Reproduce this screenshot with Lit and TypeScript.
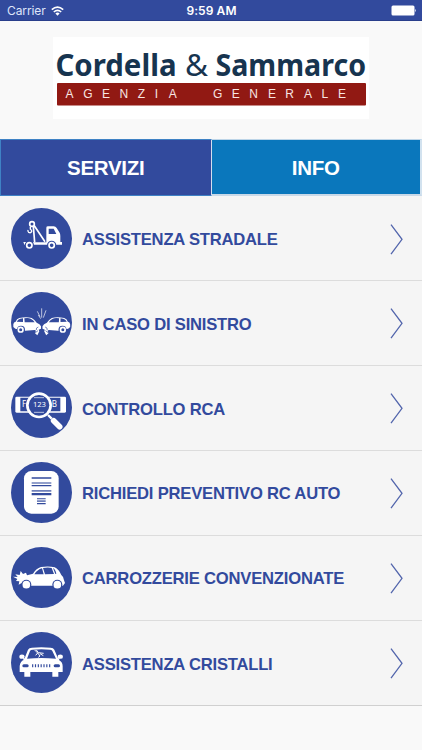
import { LitElement, html, svg, css } from "lit";
import { customElement } from "lit/decorators.js";

const crashCar = svg`
  <path fill="#fff" d="M39 126 Q40 119 46 118 Q49 109 57 107 Q78 102 94 107 Q104 113 109 121 Q119 124 122 132 L122 139 L115 142 L117 147 L111 159 L104 153 L107 145 L103 143 L75 145 L45 139 L39 134 Z"/>
  <path fill="#324a9d" d="M49 118 Q53 110 60 109 L68 108 L68 119 Z M72 108 Q84 106 91 109 Q99 113 103 120 L73 120 Z"/>
  <circle cx="62" cy="142" r="12" fill="#324a9d"/>
  <circle cx="61" cy="142" r="7" fill="#324a9d" stroke="#fff" stroke-width="5"/>
  <path fill="none" stroke="#324a9d" stroke-width="2" d="M108 143 Q106 136 114 134 M105 151 L113 145"/>`;

const icons = {
  tow: svg`<svg class="icon" viewBox="32 21 183 183">
    <circle class="disc" cx="123.500" cy="112.500" r="91.500"/>
    <g fill="none" stroke="#fff">
      <circle cx="95" cy="69" r="7" stroke-width="5"/>
      <path stroke-width="4" d="M90 77 L90 84 Q95 88 94 92 Q91 97 85 94 Q82 91 83 87"/>
      <path stroke-width="5" d="M99 76 L103 124 M101 73 L134 122"/>
    </g>
    <path fill="#fff" d="M69 123 H77 V131 H72 Z M98 124 H138 V80 Q138 76 143 76 H160 Q166 76 169 81 L177 94 Q180 98 180 105 V123 H185 V131 H98 Z"/>
    <path fill="#324a9d" d="M145 83 H160 L168 99 H145 Z"/>
    <circle cx="87" cy="133" r="14" fill="#324a9d"/><circle cx="87" cy="133" r="8" fill="none" stroke="#fff" stroke-width="5"/>
    <circle cx="154" cy="133" r="14" fill="#324a9d"/><circle cx="154" cy="133" r="8" fill="none" stroke="#fff" stroke-width="5"/>
  </svg>`,
  crash: svg`<svg class="icon" viewBox="32 29 183 183">
    <circle class="disc" cx="123.500" cy="120.500" r="91.500"/>
    ${crashCar}<g transform="translate(248.500 0) scale(-1 1)">${crashCar}</g>
    <path fill="none" stroke="#fff" stroke-width="2" d="M111 87 L119 103 M124 78 V106 M137 84 L129 106 M114 98 L121 109"/>
  </svg>`,
  plate: svg`<svg class="icon" viewBox="32 29 183 183">
    <circle class="disc" cx="123.500" cy="120.500" r="91.500"/>
    <rect x="45" y="88" width="152" height="48" rx="4" fill="#fff"/>
    <path fill="#324a9d" d="M60 91 H180 V132 H60 Z"/>
    <text class="plate" x="65" y="120" font-size="24">F</text>
    <text class="plate" x="154" y="120" font-size="24">B</text>
    <circle cx="116" cy="114" r="35" fill="#324a9d" stroke="#fff" stroke-width="8"/>
    <path stroke="#fff" stroke-width="2" d="M101 91 H131 M101 135 H131"/>
    <text class="plate" x="98" y="120" font-size="23" textLength="39">123</text>
    <path stroke="#fff" stroke-width="7" d="M143 143 L154 154"/>
    <path stroke="#fff" stroke-width="17" stroke-linecap="round" d="M160 160 L178 178"/>
  </svg>`,
  quote: svg`<svg class="icon" viewBox="32 29 183 183">
    <circle class="disc" cx="123.500" cy="120.500" r="91.500"/>
    <rect x="71" y="56" width="104" height="128" rx="22" fill="#fff"/>
    <g fill="#324a9d"><path d="M94 75h59v4H94z M94 98h59v4H94z M94 122h59v7H94z M110 138h26v3H110z M110 152h26v4H110z"/>
    <path opacity=".7" d="M94 90h59v4H94z M94 113h59v5H94z M110 144h26v5H110z"/></g>
  </svg>`,
  body: svg`<svg class="icon" viewBox="32 29 183 183">
    <circle class="disc" cx="123.500" cy="120.500" r="91.500"/>
    <path fill="#fff" d="M38 118 L52 119 L45 111 L58 113 L61 101 L68 110 L77 106 L80 114 L98 109 Q108 93 122 89 Q145 85 163 90 Q176 97 183 113 Q191 119 191 129 L194 137 L188 145 H67 L64 137 L55 142 L57 132 L47 131 L51 125 Z"/>
    <path fill="#324a9d" d="M102 111 Q111 97 125 93 L130 111 Z M128 92 Q144 89 154 92 L161 110 L134 111 Z M158 92 Q165 95 168 109 L165 110 Z"/>
    <circle cx="78" cy="142" r="15" fill="#324a9d"/><circle cx="78" cy="142" r="11.500" fill="#fff"/>
    <circle cx="171" cy="142" r="15" fill="#324a9d"/><circle cx="171" cy="142" r="11.500" fill="#fff"/>
  </svg>`,
  glass: svg`<svg class="icon" viewBox="32 29 183 183">
    <circle class="disc" cx="123.500" cy="120.500" r="91.500"/>
    <ellipse cx="65" cy="103" rx="8" ry="6.500" fill="#fff"/><ellipse cx="180" cy="103" rx="8" ry="6.500" fill="#fff"/>
    <path fill="#fff" d="M67 108 H73 L83 82 Q86 76 95 76 Q123 73 151 76 Q159 76 162 82 L173 108 H178 L176 113 Q187 119 187 132 V149 H174 V163 H156 V149 H90 V163 H72 V149 H58 V131 Q60 117 70 113 Z"/>
    <path fill="#324a9d" d="M80 109 L89 86 Q91 82 97 82 Q123 79 149 82 Q154 82 156 86 L167 109 Q123 105 80 109 Z"/>
    <path fill="none" stroke="#fff" stroke-width="3" d="M103 83 L112 92 L106 99 M108 83 L114 91 L130 93 M112 92 L119 101 L114 105 M119 94 L129 100"/>
    <rect x="66" y="126" width="19" height="9" rx="4.500" fill="#324a9d"/><rect x="160" y="126" width="19" height="9" rx="4.500" fill="#324a9d"/>
    <path stroke="#324a9d" stroke-width="3.500" d="M97 126v9 M105.500 126v9 M114 126v9 M122.500 126v9 M131 126v9 M139.500 126v9 M148 126v9"/>
  </svg>`,
};

const services = [
  { icon: icons.tow, label: "ASSISTENZA STRADALE" },
  { icon: icons.crash, label: "IN CASO DI SINISTRO" },
  { icon: icons.plate, label: "CONTROLLO RCA" },
  { icon: icons.quote, label: "RICHIEDI PREVENTIVO RC AUTO" },
  { icon: icons.body, label: "CARROZZERIE CONVENZIONATE" },
  { icon: icons.glass, label: "ASSISTENZA CRISTALLI" },
];

@customElement("app-root")
export class AppRoot extends LitElement {
  static styles = css`
    :host { display: flex; flex-direction: column; height: 750px; background: #f9f9f9; overflow: hidden; font-family: "Liberation Sans", Arial, sans-serif; }
    * { box-sizing: border-box; }
    .status { flex: none; height: 21px; display: grid; grid-template-columns: 1fr auto 1fr; align-items: center; padding: 1px 6px 0 7px; background: #324a9d; border-bottom: 1px solid #293e8b; color: #fff; font: 12px Inter, sans-serif; }
    .carrier { display: flex; align-items: center; gap: 5px; color: #dfe5fa; letter-spacing: -.1px; }
    .wifi { width: 13px; height: 10px; }
    .time { font-weight: 600; font-size: 12px; letter-spacing: .1px; }
    .battery { justify-self: end; width: 25px; height: 11px; }
    .brand { flex: none; height: 118px; display: flex; justify-content: center; padding-top: 16px; }
    .logo { width: 316px; height: 82px; background: #fff; overflow: visible; }
    .name { font-family: "Noto Sans", sans-serif; font-weight: 700; fill: #17344f; }
    .amp { font-weight: 400; }
    .sub { font-family: "Liberation Sans", sans-serif; fill: #f8e6e3; font-size: 12px; }
    .tabs { flex: none; height: 57px; display: grid; grid-template-columns: 211.500px 1fr; }
    .tab { display: flex; align-items: center; justify-content: center; color: #fff; font-weight: 700; font-size: 20.500px; letter-spacing: -.3px; padding-top: 1px; }
    .active { background: #324a9d; border: 1px solid #3f82c5; border-right-color: #d5deee; }
    .info { background: #0a77bc; border: 1px solid #bdd5e8; border-left: 0; border-bottom: 2px solid #c9d9e8; border-right: 2px solid #d2e2ef; }
    .list { flex: none; padding-top: .7px; border-bottom: 1px solid #d0d0d0; background: #f5f5f5; }
    .row { height: 84.800px; display: flex; align-items: center; padding: 0 19px 0 11px; border-bottom: 1px solid #dcdcdc; }
    .row:last-child { border-bottom: 0; }
    .icon { display: block; width: 61px; height: 61px; flex: none; margin-top: -1px; }
    .disc { fill: #324a9d; }
    .plate { font-family: "Noto Sans", sans-serif; fill: #fff; }
    .label { flex: 1; margin-left: 10px; color: #324a9d; font-size: 16.600px; letter-spacing: -.2px; font-weight: 700; white-space: nowrap; padding-top: 3px; }
    .chevron { width: 13px; height: 31px; flex: none; margin-top: 1px; }
  `;

  render() {
    return html`
      <div class="status">
        <div class="carrier"><span>Carrier</span>
          <svg class="wifi" viewBox="0 0 13 10"><g fill="none" stroke="#fff" stroke-width="1.600"><path d="M.8 3.700Q6.500-1.500 12.200 3.700M2.800 6Q6.500 2.600 10.200 6"/></g><path fill="#fff" d="M4.400 7.500Q6.500 5.700 8.600 7.500L6.500 9.700Z"/></svg>
        </div>
        <div class="time">9:59 AM</div>
        <svg class="battery" viewBox="0 0 25 11"><rect x=".5" y=".5" width="23" height="10" rx="1.500" fill="#fff"/><path fill="#fff" d="M24 4q1.500 1.500 0 3z"/></svg>
      </div>
      <div class="brand">
        <svg class="logo" viewBox="53 37 316 82">
          <text class="name" font-size="30" x="55.500" y="76.300" textLength="121" lengthAdjust="spacingAndGlyphs">Cordella</text>
          <text class="name amp" font-size="31" x="185" y="76.300" textLength="23" lengthAdjust="spacingAndGlyphs">&amp;</text>
          <text class="name" font-size="30" x="215.500" y="76.300" textLength="150.500" lengthAdjust="spacingAndGlyphs">Sammarco</text>
          <rect x="57" y="83" width="309" height="22.500" rx="1" fill="#911913"/>
          <text class="sub" y="98.300" x="65.500 83.200 102 119.500 137.700 154.800 168.800">AGENZIA</text>
          <text class="sub" y="98.300" x="213 231.800 249.300 268 285.300 304 321.500 338">GENERALE</text>
        </svg>
      </div>
      <div class="tabs"><div class="tab active">SERVIZI</div><div class="tab info">INFO</div></div>
      <div class="list">
        ${services.map((s) => html`<div class="row">${s.icon}<span class="label">${s.label}</span>
          <svg class="chevron" viewBox="0 0 13 31"><path d="M1 .7L12 15.300L1 30.200" fill="none" stroke="#5265ac" stroke-width="1.300"/></svg></div>`)}
      </div>`;
  }
}
